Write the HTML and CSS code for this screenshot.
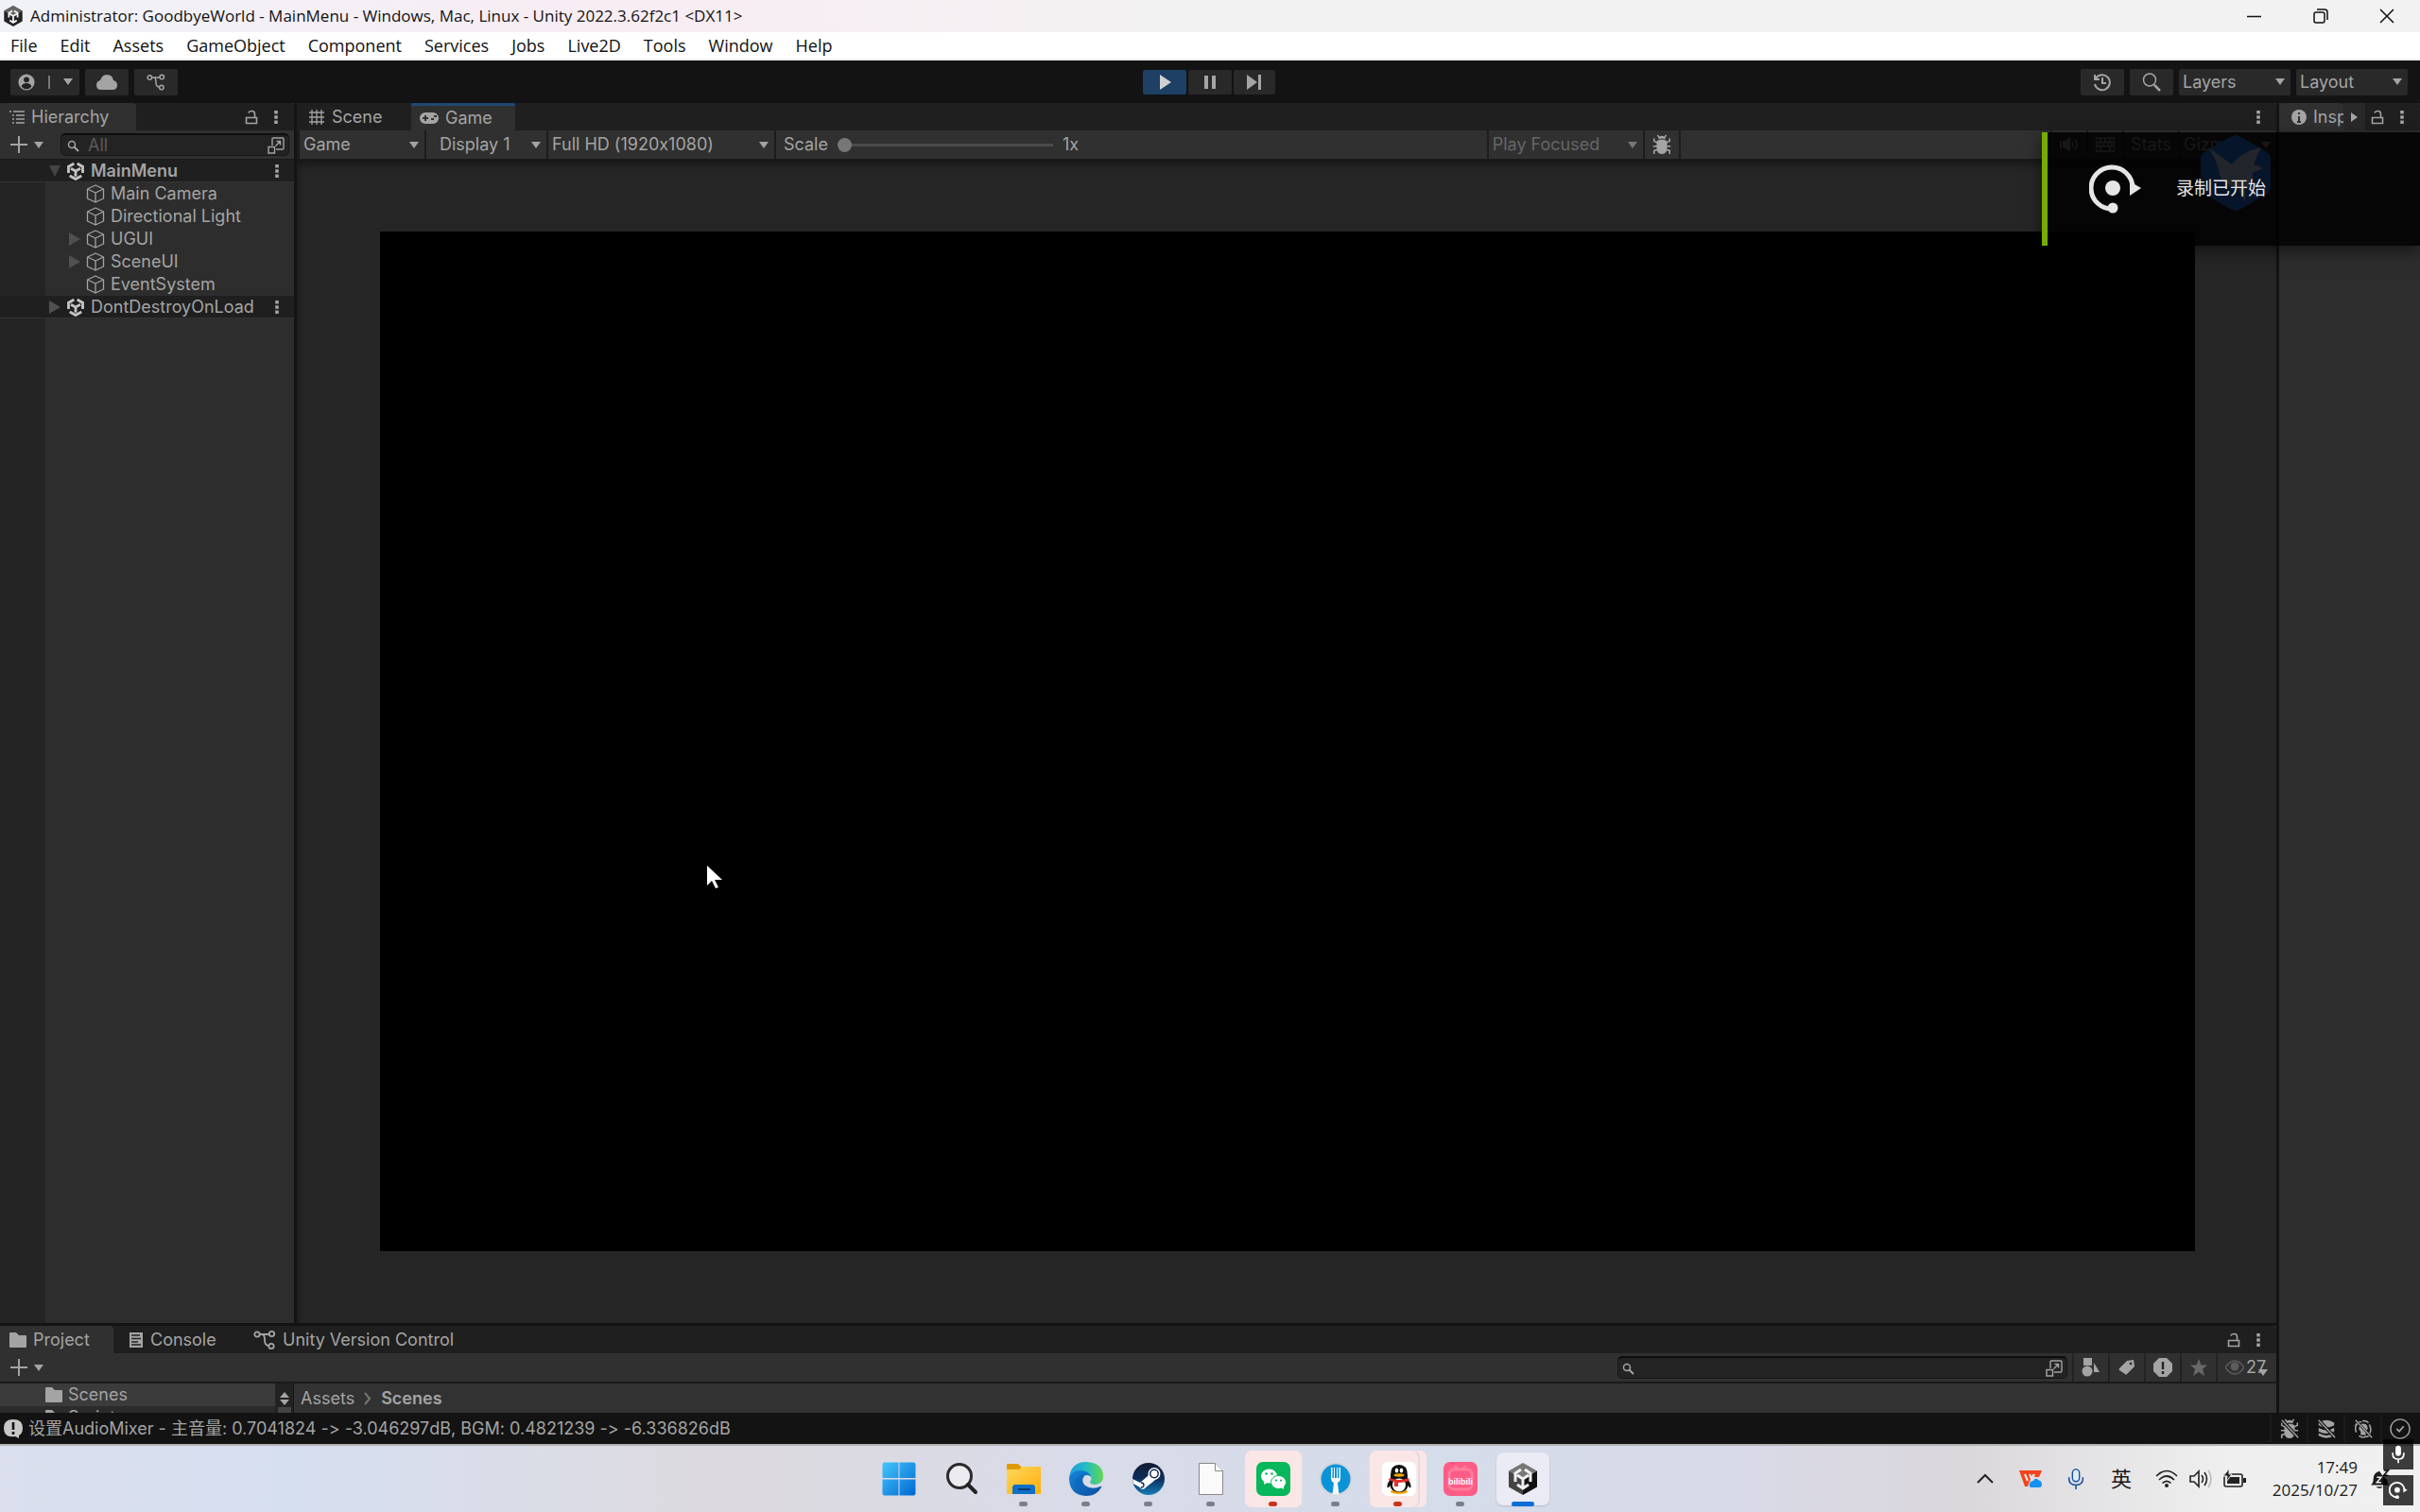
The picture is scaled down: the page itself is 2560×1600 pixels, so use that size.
FILE: index.html
```html
<!DOCTYPE html>
<html lang="zh-CN">
<head>
    <meta charset="UTF-8">
    <meta name="viewport" content="width=device-width, initial-scale=1.0">
    <title>GoodbyeWorld - MainMenu - Unity</title>
    <link rel="stylesheet" href="styles.css">
</head>
<body>
    <!-- shared icons -->
    <svg class="sprite" aria-hidden="true">
        <symbol id="i-cube" viewBox="0 0 20 20"><path d="M10 1l8.500 4v10l-8.500 4-8.500-4V5zM1.500 5l8.500 4 8.500-4M10 9v10" fill="none" stroke="currentColor" stroke-width="1.300" stroke-linejoin="round"/></symbol>
        <symbol id="i-unity" viewBox="0 0 24 24"><path d="M10 2.500L3 6.500v8M14 2.500l7 4v8M4.500 18l7.500 4.200 7.500-4.200M12 12v7M12 12L6 8.700M12 12l6-3.300" fill="none" stroke="currentColor" stroke-width="3.400"/></symbol>
        <symbol id="i-lock" viewBox="0 0 14 16"><path d="M1.500 8.500h11v6h-11zM10.500 8V4.500Q10.500 1.500 7.500 1.500T4 3.500" fill="none" stroke="currentColor" stroke-width="1.600"/></symbol>
        <symbol id="i-dots" viewBox="0 0 6 18"><path d="M1 1h4v4H1zM1 7h4v4H1zM1 13h4v4H1z" fill="currentColor"/></symbol>
        <symbol id="i-plus" viewBox="0 0 18 18"><path d="M9 0v18M0 9h18" stroke="currentColor" stroke-width="2"/></symbol>
        <symbol id="i-find" viewBox="0 0 14 14"><path d="M7.500 8.500L12 13" stroke="currentColor" stroke-width="2"/><circle cx="5" cy="6" r="3.500" fill="none" stroke="currentColor" stroke-width="1.500"/></symbol>
        <symbol id="i-open" viewBox="0 0 18 18"><path d="M5 9V2q0-1 1-1h10q1 0 1 1v10q0 1-1 1H9M1 10.500h6.500V17H1zM8.500 9.500l5-5M9.500 4.500h4v4" fill="none" stroke="currentColor" stroke-width="1.400"/></symbol>
        <symbol id="i-branch" viewBox="0 0 24 22"><g fill="none" stroke="currentColor" stroke-width="1.800"><circle cx="4" cy="5" r="2.700"/><circle cx="19.500" cy="4.500" r="2.700"/><circle cx="19" cy="17.500" r="2.700"/><path d="M7 5h10M9 5q3 0 3 6t4.500 6"/></g></symbol>
        <symbol id="i-folder" viewBox="0 0 18 16"><path d="M0 1q0-1 1-1h6l3 3h7q1 0 1 1v11q0 1-1 1H1q-1 0-1-1z" fill="currentColor"/></symbol>
        <symbol id="i-alert" viewBox="0 0 20 20"><path d="M6 0h8l6 6v8l-6 6H6l-6-6V6z" fill="currentColor"/><path d="M10 4v8M10 14v3" stroke="#222" stroke-width="2.400"/></symbol>
        <symbol id="i-bug" viewBox="0 0 22 24"><path d="M5 8q6-4 12 0v9q-1 6-6 6t-6-6zM7 6q0-4 4-4t4 4q-4-2-8 0z" fill="currentColor"/><path d="M8 4L6 1M14 4l2-3M6 10L2 8V5M16 10l4-2V5M6 14H1M16 14h5M6 18l-4 1v4M16 18l4 1v4" fill="none" stroke="currentColor" stroke-width="1.700"/></symbol>
        <symbol id="i-mic" viewBox="0 0 20 24"><rect x="6.500" y="1" width="7" height="13" rx="3.500" fill="currentColor"/><path d="M3 10v2q0 6 7 6t7-6v-2M10 18v5" fill="none" stroke="currentColor" stroke-width="2"/></symbol>
        <symbol id="i-record" viewBox="0 0 56 52"><circle cx="25" cy="25" r="8" fill="currentColor"/><path d="M25 47A22 22 0 1 1 46 24" fill="none" stroke="currentColor" stroke-width="5"/><path d="M43 18l12 7-12 8z" fill="currentColor"/><circle cx="25" cy="46" r="5.500" fill="currentColor"/></symbol>
    </svg>

    <header class="titlebar">
        <svg class="app-icon" viewBox="0 0 24 26"><path d="M12 1l10.500 6v12L12 25 1.500 19V7z" fill="#222"/><path d="M12 1l10.500 6L12 13 1.500 7z" fill="#666"/><path d="M11 7l-4 2.500v5M13 7l4 2.500v5M12 13v7M12 13L8 10.500M12 13l4-2.500M8 18l4 2.500 4-2.500" fill="none" stroke="#f2f2f2" stroke-width="2"/></svg>
        <h1>Administrator: GoodbyeWorld - MainMenu - Windows, Mac, Linux - Unity 2022.3.62f2c1 &lt;DX11&gt;</h1>
        <div class="window-buttons">
            <button aria-label="Minimize"><svg viewBox="0 0 16 16"><path d="M0 8.500h15"/></svg></button>
            <button aria-label="Restore"><svg viewBox="0 0 16 16"><rect x="1" y="4" width="11" height="11" rx="2"/><path d="M4 1h8q3 0 3 3v8"/></svg></button>
            <button aria-label="Close"><svg viewBox="0 0 16 16"><path d="M1 1l14 14M15 1L1 15"/></svg></button>
        </div>
    </header>

    <nav class="menubar">
        <a href="#">File</a>
        <a href="#">Edit</a>
        <a href="#">Assets</a>
        <a href="#">GameObject</a>
        <a href="#">Component</a>
        <a href="#">Services</a>
        <a href="#">Jobs</a>
        <a href="#">Live2D</a>
        <a href="#">Tools</a>
        <a href="#">Window</a>
        <a href="#">Help</a>
    </nav>

    <div class="toolbar">
        <div class="tools">
            <button class="tool account" aria-label="Account">
                <svg class="ic18" viewBox="0 0 20 20"><circle cx="10" cy="10" r="9.500" fill="currentColor"/><circle cx="10" cy="7" r="3.200" fill="#222"/><path d="M4 15q1-4 6-4t6 4q-2 3-6 3t-6-3z" fill="#222"/></svg>
                <span class="bar"></span>
                <span class="arrow"></span>
            </button>
            <button class="tool" aria-label="Cloud"><svg class="ic22" viewBox="0 0 22 18"><path d="M5 17q-5 0-5-5 0-4 4-5 2-6 7-6 6 0 7 6 4 1 4 5 0 5-5 5z" fill="currentColor"/></svg></button>
            <button class="tool" aria-label="Version control"><svg class="ic20"><use href="#i-branch"/></svg></button>
        </div>
        <div class="play">
            <button class="tool on" aria-label="Play"><svg class="ic16" viewBox="0 0 16 16"><path d="M3 0l12 8-12 8z" fill="currentColor"/></svg></button>
            <button class="tool" aria-label="Pause"><svg class="ic16" viewBox="0 0 16 16"><path d="M2 1h4v14H2zM10 1h4v14h-4z" fill="currentColor"/></svg></button>
            <button class="tool step" aria-label="Step"><svg class="ic16" viewBox="0 0 16 16"><path d="M0 0l11 8-11 8zM12 0h3v16h-3z" fill="currentColor"/></svg></button>
        </div>
        <div class="tools right">
            <button class="tool" aria-label="Undo history"><svg class="ic20" viewBox="0 0 20 20"><path d="M3 6a8 8 0 1 1-1 6M2 2v5h5M10 5v6h4" fill="none" stroke="currentColor" stroke-width="2"/></svg></button>
            <button class="tool" aria-label="Search"><svg class="ic20" viewBox="0 0 20 20"><circle cx="8" cy="7.500" r="6.500" fill="none" stroke="currentColor" stroke-width="1.500"/><path d="M13 13l6 6" stroke="currentColor" stroke-width="2.500"/></svg></button>
            <label class="drop boxed"><select aria-label="Layers"><option>Layers</option></select></label>
            <label class="drop boxed"><select aria-label="Layout"><option>Layout</option></select></label>
        </div>
    </div>

    <main class="editor">
        <aside class="hierarchy">
            <div class="tabs">
                <button class="tab hierarchy-tab active"><svg class="ic16" viewBox="0 0 16 14"><path d="M0 1h2M4 1h12M3 5h2M7 5h9M3 9h2M7 9h9M3 13h2M7 13h9" stroke="currentColor" stroke-width="1.500"/></svg>Hierarchy</button>
                <button class="bare push" aria-label="Lock"><svg class="ic16"><use href="#i-lock"/></svg></button>
                <button class="bare" aria-label="More"><svg class="ic16"><use href="#i-dots"/></svg></button>
            </div>
            <div class="strip">
                <button class="add" aria-label="Create"><svg class="ic18"><use href="#i-plus"/></svg><span class="arrow"></span></button>
                <label class="search">
                    <svg class="ic14"><use href="#i-find"/></svg>
                    <input type="text" placeholder="All" aria-label="Search hierarchy">
                    <svg class="ic18"><use href="#i-open"/></svg>
                </label>
            </div>
            <ul class="tree">
                <li class="scene open"><span class="fold down"></span><svg class="ic20"><use href="#i-unity"/></svg><b>MainMenu</b><svg class="ic16 more"><use href="#i-dots"/></svg></li>
                <li class="node"><span class="fold none"></span><svg class="ic20"><use href="#i-cube"/></svg>Main Camera</li>
                <li class="node"><span class="fold none"></span><svg class="ic20"><use href="#i-cube"/></svg>Directional Light</li>
                <li class="node"><span class="fold"></span><svg class="ic20"><use href="#i-cube"/></svg>UGUI</li>
                <li class="node"><span class="fold"></span><svg class="ic20"><use href="#i-cube"/></svg>SceneUI</li>
                <li class="node"><span class="fold none"></span><svg class="ic20"><use href="#i-cube"/></svg>EventSystem</li>
                <li class="scene"><span class="fold"></span><svg class="ic20"><use href="#i-unity"/></svg>DontDestroyOnLoad<svg class="ic16 more"><use href="#i-dots"/></svg></li>
            </ul>
        </aside>

        <section class="game">
            <div class="tabs">
                <button class="tab scene-tab"><svg class="ic16" viewBox="0 0 16 16"><path d="M3 0v16M8 0v16M13 0v16M0 3h16M0 8h16M0 13h16" stroke="currentColor" stroke-width="1.300"/></svg>Scene</button>
                <button class="tab game-tab active focused"><svg class="ic20" viewBox="0 0 20 12"><rect width="20" height="12" rx="6" fill="currentColor"/><path d="M6 3v6M3 6h6M12 7h3M15 4h3" stroke="#303030" stroke-width="2"/></svg>Game</button>
                <button class="bare push" aria-label="More"><svg class="ic16"><use href="#i-dots"/></svg></button>
            </div>
            <div class="strip game-strip">
                <label class="drop view"><select aria-label="View"><option>Game</option></select></label>
                <label class="drop display"><select aria-label="Display"><option>Display 1</option></select></label>
                <label class="drop aspect"><select aria-label="Resolution"><option>Full HD (1920x1080)</option></select></label>
                <div class="scale">
                    <label for="scale">Scale</label>
                    <input id="scale" type="range" min="1" max="5" step="0.1" value="1">
                    <output for="scale">1x</output>
                </div>
                <label class="drop focus"><select aria-label="Play mode" disabled><option>Play Focused</option></select></label>
                <button class="cell" aria-label="Frame debugger"><svg class="ic24"><use href="#i-bug"/></svg></button>
                <span class="cell blank"></span>
                <button class="cell" aria-label="Mute audio"><svg class="ic20" viewBox="0 0 20 16"><path d="M0 4h2v8H0zM3 4h3l5-4v16l-5-4H3z" fill="currentColor"/><path d="M13 5q2 3 0 6M16 3q4 5 0 10" fill="none" stroke="currentColor" stroke-width="1.500"/></svg></button>
                <button class="cell" aria-label="Shortcuts"><svg class="ic20" viewBox="0 0 20 16"><path d="M0 1h20v14H0zM0 5.500h20M0 10h20M5 1v4.500M10 1v4.500M15 1v4.500M3 5.500V10M8 5.500V10M13 5.500V10M17 5.500V10M5 10v5M15 10v5" fill="none" stroke="currentColor" stroke-width="1.500"/></svg></button>
                <button class="cell stats">Stats</button>
                <label class="drop gizmos"><select aria-label="Gizmos"><option>Gizmos</option></select></label>
            </div>
            <div class="viewport">
                <div class="screen"></div>
            </div>
        </section>

        <section class="project">
            <div class="tabs">
                <button class="tab project-tab active"><svg class="ic18"><use href="#i-folder"/></svg>Project</button>
                <button class="tab console-tab"><svg class="ic16" viewBox="0 0 16 16"><path d="M1 0h14v16H1z" fill="currentColor"/><path d="M3 3h9M3 6.500h10M3 10h7M3 13h10" stroke="#222" stroke-width="1.500"/></svg>Console</button>
                <button class="tab version-tab"><svg class="ic24"><use href="#i-branch"/></svg>Unity Version Control</button>
                <button class="bare push" aria-label="Lock"><svg class="ic16"><use href="#i-lock"/></svg></button>
                <button class="bare" aria-label="More"><svg class="ic16"><use href="#i-dots"/></svg></button>
            </div>
            <div class="strip project-strip">
                <button class="add" aria-label="Create asset"><svg class="ic18"><use href="#i-plus"/></svg><span class="arrow"></span></button>
                <label class="search wide">
                    <svg class="ic14"><use href="#i-find"/></svg>
                    <input type="text" aria-label="Search assets">
                    <svg class="ic18"><use href="#i-open"/></svg>
                </label>
                <button class="cell" aria-label="Search by type"><svg class="ic20" viewBox="0 0 20 20"><path d="M2 0h9v8H2zM13 5l6 10h-6z" fill="currentColor"/><circle cx="6" cy="14" r="5.500" fill="currentColor"/></svg></button>
                <button class="cell" aria-label="Search by label"><svg class="ic18" viewBox="0 0 18 18"><path d="M1 10l8-8 7-1 1 7-8 8q-1 1-2 0l-6-4q-1-1 0-2z" fill="currentColor"/><circle cx="13" cy="5" r="1.400" fill="#303030"/></svg></button>
                <button class="cell" aria-label="Search by import log"><svg class="ic20"><use href="#i-alert"/></svg></button>
                <button class="cell dim" aria-label="Save search"><svg class="ic20" viewBox="0 0 20 20"><path d="M10 1l2.500 6.500H19l-5 4.300 2 7.200-6-4.300L4 19l2-7.200L1 7.500h6.500z" fill="currentColor"/></svg></button>
                <button class="cell hidden-count"><svg class="ic20" viewBox="0 0 20 14"><path d="M0 7q10-14 20 0-10 14-20 0z" fill="none" stroke="#5c5c5c" stroke-width="1.500"/><circle cx="10" cy="6" r="4.500" fill="#5c5c5c"/></svg>27<span class="arrow"></span></button>
            </div>
            <div class="browser">
                <ul class="folders">
                    <li class="selected"><svg class="ic18"><use href="#i-folder"/></svg>Scenes</li>
                    <li><svg class="ic18"><use href="#i-folder"/></svg>Scripts</li>
                </ul>
                <div class="scroller"><span class="up"></span><span class="dn"></span><span class="thumb"></span></div>
                <div class="crumbs"><a href="#">Assets</a><svg class="sep" viewBox="0 0 8 14"><path d="M1 1l5 6-5 6"/></svg><a href="#"><b>Scenes</b></a></div>
            </div>
        </section>

        <aside class="inspector">
            <div class="tabs">
                <button class="tab inspector-tab active"><svg class="ic16" viewBox="0 0 16 16"><circle cx="8" cy="8" r="8" fill="currentColor"/><path d="M8 3v2M8 7v6M6 13h4" stroke="#303030" stroke-width="2"/></svg><span>Inspector</span></button>
                <button class="scroll-right" aria-label="Next tab"><span class="arrow east"></span></button>
                <button class="bare push" aria-label="Lock"><svg class="ic16"><use href="#i-lock"/></svg></button>
                <button class="bare" aria-label="More"><svg class="ic16"><use href="#i-dots"/></svg></button>
            </div>
        </aside>
    </main>

    <div class="statusbar">
        <svg class="ic20" viewBox="0 0 20 20"><path d="M10 0q10 0 10 9 0 6-4 8v3l-4-2q-12 2-12-9Q0 0 10 0z" fill="#c8c8c8"/><path d="M10 3v8M10 13v3" stroke="#131313" stroke-width="2.600"/></svg>
        <p>设置AudioMixer - 主音量: 0.7041824 -&gt; -3.046297dB, BGM: 0.4821239 -&gt; -6.336826dB</p>
        <div class="status-icons">
            <button aria-label="Debugger"><svg class="ic24" viewBox="0 0 22 24"><use href="#i-bug" width="22" height="24"/><path d="M2 2l19 20" stroke="#131313" stroke-width="4"/><path d="M2 2l19 20" stroke="currentColor" stroke-width="1.500"/></svg></button>
            <button aria-label="Cache server"><svg class="ic24" viewBox="0 0 22 24"><path d="M2 5q9-6 18 0v3q-9 5-18 0zM2 11q9 5 18 0v4q-9 5-18 0zM2 17q9 5 18 0v3q-9 5-18 0z" fill="currentColor"/><path d="M2 2l19 20" stroke="#131313" stroke-width="4"/><path d="M2 2l19 20" stroke="currentColor" stroke-width="1.500"/></svg></button>
            <button aria-label="Auto lighting"><svg class="ic24" viewBox="0 0 22 24"><path d="M3 16Q0 9 5 4h4M18 7q4 8-2 14h-4M6 20q4 3 8 1M10 3q4-1 7 2M4 8V4M18 21v-4" fill="none" stroke="currentColor" stroke-width="1.700"/><path d="M11 6a5 5 0 0 1 3 9v4H8v-4a5 5 0 0 1 3-9z" fill="currentColor"/><path d="M2 2l19 20" stroke="#131313" stroke-width="3"/><path d="M2 2l19 20" stroke="currentColor" stroke-width="1.500"/></svg></button>
            <button aria-label="Progress"><svg class="ic24" viewBox="0 0 24 24"><circle cx="12" cy="12" r="11" fill="none" stroke="currentColor" stroke-width="1.500"/><path d="M8 12l3 3 5-6" fill="none" stroke="currentColor" stroke-width="2"/></svg></button>
        </div>
    </div>

    <footer class="taskbar">
        <div class="apps">
            <button class="app" aria-label="Start"><svg viewBox="0 0 36 36"><defs><linearGradient id="win" x1="0" y1="0" x2="1" y2="1"><stop offset="0" stop-color="#45c6fc"/><stop offset="1" stop-color="#0067d2"/></linearGradient></defs><path d="M2 .5h15.500V17H.5V2zM18.500.5h15.500l1.500 1.500v15h-17zM.5 18.500h17v17H2L.5 34zM18.500 18.500h17V34L34 35.500H18.500z" fill="url(#win)"/></svg></button>
            <button class="app" aria-label="Search"><svg viewBox="0 0 36 36"><circle cx="16" cy="15" r="12.500" fill="#ebebf0" stroke="#2b2b2b" stroke-width="3"/><path d="M25 24l8 8" stroke="#222" stroke-width="4" stroke-linecap="round"/></svg></button>
            <button class="app running" aria-label="File Explorer"><svg viewBox="0 0 36 36"><defs><linearGradient id="fold" x1="0" y1="0" x2="1" y2="1"><stop offset="0" stop-color="#ffd75e"/><stop offset="1" stop-color="#fdae0a"/></linearGradient></defs><path d="M0 8V3q0-1 1-1h11l4 4v4z" fill="#e19a07"/><path d="M0 8h13l3-3h20v29H0z" fill="url(#fold)"/><path d="M6 34v-7q0-3 3-3h18q3 0 3 3v7z" fill="#0f6fc6"/><path d="M12 29h13" stroke="#0b3f73" stroke-width="2"/></svg></button>
            <button class="app running" aria-label="Edge"><svg viewBox="0 0 36 36"><defs><linearGradient id="edge" x1="0" y1="0" x2="1" y2="0"><stop offset="0" stop-color="#1e9be0"/><stop offset=".5" stop-color="#23bcc4"/><stop offset="1" stop-color="#62d852"/></linearGradient><linearGradient id="edgeb" x1="0" y1="0" x2="1" y2="1"><stop offset="0" stop-color="#1586dc"/><stop offset="1" stop-color="#0b4d9c"/></linearGradient></defs><path d="M0 17Q2 0 18 0q18 1 18 15 0 8-8 9-6 0-6-3 3-3 0-6-9-9-22 2z" fill="url(#edge)"/><path d="M0 17Q3 9 12 9q8 0 11 6-5-2-7 0-4 5 1 10 7 5 16 1 2-1 1 1-5 9-16 9Q0 35 0 17z" fill="url(#edgeb)"/><path d="M15 16q-5 8 3 13-7 2-11-4-3-8 8-12z" fill="#0b63b8" opacity=".5"/></svg></button>
            <button class="app running" aria-label="Steam"><svg viewBox="0 0 36 36"><defs><linearGradient id="steam" x1="0" y1="0" x2="0" y2="1"><stop offset="0" stop-color="#151a33"/><stop offset=".5" stop-color="#0c2e5c"/><stop offset="1" stop-color="#157fb5"/></linearGradient></defs><circle cx="18" cy="18" r="17" fill="url(#steam)"/><path d="M1 18l8 4 8-7 4-6 7 5-4 6-9 7q-3 4-6 0l-7-4z" fill="#fff"/><circle cx="24" cy="12.500" r="6.500" fill="#fff"/><circle cx="24" cy="12.500" r="4.200" fill="none" stroke="#14284e" stroke-width="1.500"/><path d="M10 22q3 0 3 2.500T10 27" fill="none" stroke="#14284e" stroke-width="1.300"/></svg></button>
            <button class="app running" aria-label="Document"><svg viewBox="0 0 36 36"><path d="M5.500 1.500h17l8 8v25h-25z" fill="#fafafa" stroke="#888"/><path d="M22.500 1.500v8h8" fill="#fff" stroke="#888"/></svg></button>
            <button class="app running alert" aria-label="WeChat"><svg viewBox="0 0 36 36"><rect width="36" height="36" rx="7" fill="#07b75b"/><ellipse cx="13.500" cy="15" rx="8.500" ry="7.500" fill="#fff"/><path d="M8 19v5l5-3z" fill="#fff"/><ellipse cx="23.500" cy="21.500" rx="8" ry="7" fill="#fff" stroke="#07b75b"/><path d="M25 26l4 3v-5z" fill="#fff"/><g fill="#07b75b"><circle cx="10.500" cy="12.500" r="1.300"/><circle cx="16.500" cy="12.500" r="1.300"/><circle cx="21" cy="19.500" r="1.100"/><circle cx="26" cy="19.500" r="1.100"/></g></svg></button>
            <button class="app running" aria-label="Fork"><svg viewBox="0 0 36 36"><circle cx="18" cy="18" r="16.500" fill="#0b93d8" stroke="#d0d3d8" stroke-width="2"/><path d="M13 6v11q0 4 3 5l-1.500 12.500h7L20 22q3-1 3-5V6h-1.500v11h-1.500V6h-1v11h-2V6h-1v11h-1.500V6z" fill="#f4f6f8"/></svg></button>
            <button class="app running alert stacked" aria-label="QQ"><svg viewBox="0 0 36 36"><rect width="36" height="36" rx="6" fill="#fff"/><ellipse cx="18" cy="31.500" rx="9" ry="2.500" fill="#f5a300"/><path d="M18 3q9 0 9 11v4q4 5 3.500 9-1.500 1-3-2-1 7-9.500 7t-9.500-7q-1.500 3-3 2Q5 23 9 18v-4Q9 3 18 3z" fill="#111"/><ellipse cx="18" cy="24.500" rx="7" ry="7" fill="#fff"/><ellipse cx="15.500" cy="9" rx="1.800" ry="2.600" fill="#fff"/><ellipse cx="20.500" cy="9" rx="1.800" ry="2.600" fill="#fff"/><ellipse cx="18" cy="14" rx="5.500" ry="1.700" fill="#f5a300"/><path d="M8 17q10 4 20 0l1 3q-5 2-12 2v4h-4v-5q-4-1-6-2z" fill="#e6302b"/></svg></button>
            <button class="app running" aria-label="bilibili"><svg viewBox="0 0 36 36"><rect width="36" height="36" rx="7" fill="#fd5c86"/><path d="M12 4l4 4M24 4l-4 4" stroke="#fe7c9d" stroke-width="3"/><rect x="6" y="8" width="24" height="21" rx="5" fill="none" stroke="#fe7c9d" stroke-width="3"/><text x="18" y="24" text-anchor="middle" class="bili">bilibili</text></svg></button>
            <button class="app running current" aria-label="Unity"><svg viewBox="0 0 36 36"><path d="M18 1l15 8.500L18 18 3 9.500z" fill="#777"/><path d="M3 9.500L18 18v17L3 26.500z" fill="#444"/><path d="M33 9.500L18 18v17l15-8.500z" fill="#111"/><path d="M16 8l-6 4v9M20 8l6 4v9M12 24l6 4 6-4M18 18v8M18 18l-6-4M18 18l6-4" fill="none" stroke="#f0f0f2" stroke-width="3"/></svg></button>
        </div>
        <div class="tray">
            <button aria-label="Show hidden icons"><svg class="ic18" viewBox="0 0 18 18"><path d="M1 13l8-8 8 8" fill="none" stroke="#222" stroke-width="2"/></svg></button>
            <button aria-label="WPS"><svg class="ic24" viewBox="0 0 24 20"><path d="M0 1h24l-3 7h-5l1-3h-3L9 18H6z" fill="#f2451e"/><path d="M6 5l3 7M11 5l2 5" stroke="#eee" stroke-width="2"/><path d="M13 19q-3 0-2-4 1-3 4-3 2-4 5-1 4 1 4 5 0 3-3 3z" fill="#1491f5"/></svg></button>
            <button aria-label="Microphone"><svg class="ic24" viewBox="0 0 20 24"><rect x="6" y="1" width="8" height="14" rx="4" fill="#dfeaf8" stroke="#1552a0" stroke-width="1.500"/><path d="M2 10v2q0 7 8 7t8-7v-2M10 19v5" fill="none" stroke="#1552a0" stroke-width="1.700"/></svg></button>
            <button class="ime">英</button>
            <button class="quick" aria-label="Network, volume and battery">
                <svg class="ic24" viewBox="0 0 24 20"><g fill="none" stroke="#222" stroke-width="1.700"><path d="M1 7q11-11 22 0M4 11q8-8 16 0M7.500 14.500q4.500-4.500 9 0"/></g><circle cx="12" cy="17" r="2" fill="#222"/></svg>
                <svg class="ic24" viewBox="0 0 24 20"><g fill="none" stroke="#222" stroke-width="1.600"><path d="M1 7h4l5-5v16l-5-5H1zM13 6q3 4 0 8M16 3q5 7 0 14"/><path d="M20 1q6 9 0 18" stroke="#bbb"/></g></svg>
                <svg class="ic24" viewBox="0 0 24 20"><rect x="1" y="5" width="19" height="13" rx="2" fill="none" stroke="#222" stroke-width="1.600"/><path d="M4 8h13v7H4zM21 9h3v5h-3z" fill="#222"/><path d="M6-1L0 7h4l-1 6 6-8H6z" fill="#222" stroke="#eee"/></svg>
            </button>
            <button class="clock"><time>17:49</time><time>2025/10/27</time></button>
            <button aria-label="Notifications"><svg class="ic24" viewBox="0 0 24 24"><path d="M1 19q3-2 3-7 0-7 7-9 3 6 9 10 0 4 2 6zM7 21h8q-4 4-8 0z" fill="#1c1c1c"/><path d="M8 10h5l-5 6h5" fill="none" stroke="#eee" stroke-width="1.600"/><path d="M16 2h5l-5 6h5" fill="none" stroke="#1c1c1c" stroke-width="2"/></svg></button>
        </div>
    </footer>

    <!-- recorder overlays -->
    <div class="toast" role="status">
        <svg class="badge" viewBox="0 0 76 82"><path d="M38 1q4 0 33 18 4 3 4 7v30q0 4-4 7Q42 81 38 81T5 63q-4-3-4-7V26q0-4 4-7Q34 1 38 1z" fill="#07152b"/><path d="M9 14l25 18Q45 18 65 14q-5 9-8 18l10 4-11 5q0 12-8 17v14l-8-16q-18-2-20-18-2-11-11-24z" fill="#22252b"/></svg>
        <svg class="rec"><use href="#i-record"/></svg>
        <p>录制已开始</p>
    </div>
    <div class="indicators">
        <span><svg class="ic20"><use href="#i-mic"/></svg></span>
        <span><svg class="ic20"><use href="#i-record"/></svg></span>
    </div>
    <svg class="cursor" viewBox="0 0 16 24"><path d="M0 0v21l5-5 4 8 3-1-4-8h8z" fill="#fff"/></svg>
</body>
</html>
```
FILE: styles.css
```css
* {
    margin: 0;
    padding: 0;
    box-sizing: border-box;
}
body {
    min-height: 100vh;
    display: flex;
    flex-direction: column;
    background: #131313;
    color: #a4a4a4;
    font: 18px/24px Inter, "Noto Sans CJK SC", sans-serif;
    font-variant-ligatures: none;
    font-optical-sizing: none;
    overflow: hidden;
    position: relative;
}
button, input, select {
    font: inherit;
    font-variant-ligatures: none;
    font-optical-sizing: none;
    color: inherit;
    background: none;
    border: none;
    outline: none;
}
button {
    display: flex;
    align-items: center;
    justify-content: center;
    white-space: nowrap;
}
a {
    color: inherit;
    text-decoration: none;
}
ul {
    list-style: none;
}
svg {
    flex: none;
}
.sprite {
    position: absolute;
    width: 0;
    height: 0;
}
.ic14 { width: 14px; height: 14px; }
.ic16 { width: 16px; height: 16px; }
.ic18 { width: 18px; height: 18px; }
.ic20 { width: 20px; height: 20px; }
.ic22 { width: 22px; height: 22px; }
.ic24 { width: 24px; height: 22px; }

/* window frame */
.titlebar {
    height: 34px;
    display: flex;
    align-items: center;
    padding-left: 2px;
    background: linear-gradient(90deg, #f0f2f8, #f8ecf3 26%, #f2f2f2 50%);
    color: #111;
}
.app-icon {
    width: 24px;
    height: 24px;
}
.titlebar h1 {
    flex: 1;
    padding-left: 6px;
    font: 17px/24px "Open Sans", sans-serif;
}
.window-buttons {
    display: flex;
}
.window-buttons button {
    width: 70px;
    height: 34px;
}
.window-buttons svg {
    width: 16px;
    height: 16px;
    fill: none;
    stroke: #111;
    stroke-width: 1.5;
}
.menubar {
    height: 30px;
    display: flex;
    gap: 24px;
    padding-left: 11px;
    background: #fff;
    border-bottom: 2px solid #f0f0f0;
    color: #111;
    font: 18px/28px "Open Sans", sans-serif;
}

/* toolbar */
.toolbar {
    height: 45px;
    display: grid;
    grid-template-columns: 1fr auto 1fr;
    align-items: center;
    padding: 0 13px 0 11px;
}
.tools {
    display: flex;
    gap: 6px;
}
.right {
    justify-content: flex-end;
}
.play {
    display: flex;
    gap: 2px;
}
.tool {
    width: 46px;
    height: 28px;
    background: #292929;
    border-radius: 2px;
}
.play .tool {
    height: 26px;
}
.play .step {
    width: 44px;
}
.tool.on {
    background: #1d4064;
    color: #d0d0d0;
}
.account {
    width: 73px;
    gap: 14px;
}
.bar {
    width: 2px;
    height: 14px;
    background: #777;
}
.arrow, .drop::after {
    content: "";
    border: 5px solid transparent;
    border-top: 7px solid #a4a4a4;
    border-bottom: none;
}
.arrow.east {
    border: 5px solid transparent;
    border-left: 7px solid #a4a4a4;
    border-right: none;
}
.drop {
    display: flex;
    align-items: center;
    padding: 0 6px 0 4px;
}
.drop select {
    flex: 1;
    min-width: 0;
    appearance: none;
}
.drop select:disabled {
    color: #666;
    opacity: 1;
}
.boxed {
    width: 118px;
    height: 28px;
    background: #292929;
    border-radius: 2px;
}

/* docked panels */
.editor {
    flex: 1;
    display: grid;
    grid-template-columns: 311px 1fr 149px;
    grid-template-rows: 1fr 92px;
    gap: 3px;
}
.tabs {
    display: flex;
    height: 29px;
    background: #1f1f1f;
    border-radius: 4px 4px 0 0;
}
.tab {
    gap: 7px;
    justify-content: flex-start;
    padding: 0 10px;
}
.tab.active {
    background: #303030;
    border-radius: 4px 4px 0 0;
}
.hierarchy-tab {
    width: 144px;
}
.scene-tab {
    width: 121px;
    gap: 8px;
    padding-left: 13px;
}
.game-tab {
    width: 110px;
    padding-left: 9px;
}
.tab.focused {
    border-top: 3px solid #1f4a74;
    border-radius: 2px 2px 0 0;
}
.bare {
    width: 26px;
}
.push {
    margin-left: auto;
}
.bare:last-child {
    margin-right: 6px;
}
.strip {
    display: flex;
    height: 31px;
    background: #303030;
    border-bottom: 1px solid #1a1a1a;
}
.add {
    flex: none;
    gap: 7px;
    width: 56px;
}
.search {
    flex: 1;
    min-width: 0;
    display: flex;
    align-items: center;
    gap: 8px;
    height: 24px;
    margin: 3px 5px 0 8px;
    padding: 0 4px 0 6px;
    background: #232323;
    border: 1px solid #181818;
    border-top: 2px solid #0d0d0d;
    border-radius: 5px;
}
.search input {
    flex: 1;
    min-width: 0;
}
.search input::placeholder {
    color: #5a5a5a;
}
.search.wide {
    flex: none;
    width: 476px;
    margin-left: auto;
    padding-left: 4px;
}

.hierarchy {
    display: flex;
    flex-direction: column;
    background: #2d2d2d;
}
.tree {
    flex: 1;
    background: linear-gradient(90deg, #242424 48px, transparent 48px);
}
.tree li {
    display: flex;
    align-items: center;
    gap: 6px;
    height: 24px;
}
.tree .scene {
    background: #1f1f1f;
    border-bottom: 1px solid #333;
    padding: 0 10px 0 52px;
}
.tree .scene b {
    font-weight: 600;
}
.tree .node {
    padding-left: 73px;
}
.tree .more {
    margin-left: auto;
}
.scene svg:first-of-type {
    color: #c4c4c4;
}
.fold {
    width: 12px;
    border: 7px solid transparent;
    border-left: 12px solid #505050;
    border-right: none;
}
.fold.down {
    border: 6px solid transparent;
    border-top: 12px solid #454545;
    border-bottom: none;
}
.fold.none {
    visibility: hidden;
}

.game {
    display: flex;
    flex-direction: column;
    background: #262626;
}
.game-strip {
    gap: 2px;
    padding-left: 3px;
    background: #1c1c1c;
}
.game-strip > * {
    background: #303030;
}
.view { width: 132px; }
.display { width: 127px; padding-left: 14px; }
.aspect { width: 239px; }
.scale {
    flex: 747 0;
    display: flex;
    align-items: center;
    gap: 10px;
    padding-left: 8px;
}
.scale input {
    width: 228px;
    height: 16px;
    appearance: none;
    background: linear-gradient(#4c4c4c, #4c4c4c) center / 100% 3px no-repeat;
}
.scale input::-webkit-slider-thumb {
    appearance: none;
    width: 15px;
    height: 15px;
    border-radius: 50%;
    background: #777;
}
.focus {
    width: 163px;
}
.focus::after {
    border-top-color: #777;
}
.cell {
    width: 36px;
}
.blank {
    flex: 393 0;
}
.stats { width: 57px; }
.gizmos { width: 102px; }
.viewport {
    flex: 1;
    padding: 76px 86px 76px 88px;
    box-shadow: inset 0 12px 10px -8px #151515, inset 6px 0 6px -4px #1d1d1d;
}
.screen {
    height: 100%;
    background: #000;
}

.project {
    grid-column: 1 / 3;
    grid-row: 2;
    background: #303030;
    overflow: hidden;
}
.project-tab { width: 120px; }
.console-tab { width: 138px; padding-left: 16px; }
.version-tab { padding-left: 10px; }
.project-strip .cell {
    width: 38px;
    border-left: 2px solid #232323;
}
.dim {
    color: #686868;
}
.project-strip .hidden-count {
    justify-content: flex-start;
    width: 64px;
    gap: 2px;
    padding-left: 8px;
}
.hidden-count .arrow {
    margin: 10px 0 0 -10px;
}
.browser {
    display: flex;
    height: 32px;
    border-top: 1px solid #1a1a1a;
    overflow: hidden;
}
.folders {
    width: 291px;
    background: #2b2b2b;
}
.folders li {
    display: flex;
    align-items: center;
    gap: 6px;
    height: 24px;
    padding-left: 48px;
}
.folders .selected {
    background: #3b3b3b;
}
.scroller {
    width: 20px;
    display: flex;
    flex-direction: column;
    align-items: center;
    gap: 2px;
    padding-top: 9px;
    background: #222;
    border-right: 1px solid #171717;
}
.up, .dn {
    border: 5px solid transparent;
}
.up {
    border-bottom: 6px solid #a4a4a4;
    border-top: none;
}
.dn {
    border-top: 6px solid #a4a4a4;
    border-bottom: none;
}
.thumb {
    width: 14px;
    height: 12px;
    background: #444;
}
.crumbs {
    flex: 1;
    display: flex;
    align-items: center;
    gap: 10px;
    padding-left: 7px;
    background: #323232;
}
.sep {
    width: 8px;
    height: 14px;
    fill: none;
    stroke: #777;
    stroke-width: 2;
}
.crumbs b {
    font-weight: 600;
}

.inspector {
    grid-column: 3;
    grid-row: 1 / 3;
    background: #2d2d2d;
}
.inspector-tab {
    width: 68px;
    padding: 0 0 0 13px;
    overflow: hidden;
}
.scroll-right {
    width: 24px;
    background: #292929;
}

/* status line */
.statusbar {
    height: 33px;
    display: flex;
    align-items: center;
    gap: 6px;
    padding: 0 3px 0 4px;
}
.status-icons {
    display: flex;
    margin-left: auto;
}
.status-icons button {
    width: 39px;
    height: 29px;
    border-left: 2px solid #1c1c1c;
}

/* taskbar */
.taskbar {
    height: 72px;
    display: grid;
    grid-template-columns: 1fr auto 1fr;
    align-items: center;
    border-top: 2px solid #b2b2b5;
    background: linear-gradient(90deg, #dbdfee, #d6dff0 12%, #dddadf 30%, #d9dbe8 44%, #d5dcea 60%, #d9dae8 72%, #dad7db 81%, #efefef 92%, #f0f0f0);
    color: #1a1a1a;
}
.apps {
    grid-column: 2;
    display: flex;
    gap: 6px;
    padding-left: 2px;
}
.app {
    width: 60px;
    height: 60px;
    border-radius: 7px;
    position: relative;
}
.app svg {
    width: 36px;
    height: 36px;
}
.running::after {
    content: "";
    position: absolute;
    bottom: 1px;
    left: 25px;
    width: 9px;
    height: 5px;
    border-radius: 3px;
    background: #7c7f88;
}
.alert {
    background: #fbe6e6;
}
.alert::after {
    background: #c93418;
}
.stacked {
    width: 51px;
    margin-right: 9px;
    padding-left: 10px;
    box-shadow: 2px 0 #dddbe4, 9px 0 #fbe6e6;
}
.current {
    background: #eaebf4;
    box-shadow: 0 1px 2px #b8bac6;
    height: 56px;
    margin: 2px;
    width: 56px;
}
.current::after {
    left: 16px;
    bottom: -1px;
    width: 24px;
    background: #0b6fd3;
}
.bili {
    font: bold 9px "Liberation Sans", sans-serif;
    fill: #fff;
}
.tray {
    display: flex;
    justify-content: flex-end;
    align-items: center;
    padding-right: 18px;
}
.tray button {
    width: 48px;
}
.tray .ime {
    font-size: 22px;
}
.tray .quick {
    width: 120px;
    gap: 12px;
}
.tray .clock {
    flex-direction: column;
    align-items: flex-end;
    width: 106px;
    font: 17px/24px "Open Sans", sans-serif;
}

/* overlays */
.toast {
    position: absolute;
    top: 140px;
    right: 0;
    width: 400px;
    height: 120px;
    display: flex;
    align-items: center;
    padding-left: 44px;
    background: rgba(0, 0, 0, 0.86);
    border-left: 6px solid #76ab00;
    box-shadow: 0 6px 16px rgba(0, 0, 0, 0.5);
    color: #e6e6e6;
    font-size: 19px;
}
.badge {
    position: absolute;
    top: 2px;
    left: 161px;
    width: 76px;
    height: 82px;
}
.rec {
    width: 56px;
    height: 52px;
    margin-right: 36px;
}
.toast p {
    position: relative;
}
.indicators {
    position: absolute;
    right: 7px;
    bottom: 7px;
    display: grid;
    gap: 6px;
    color: #fff;
}
.indicators span {
    display: grid;
    place-items: center;
    width: 32px;
    height: 32px;
    background: rgba(0, 0, 0, 0.75);
}
.cursor {
    position: absolute;
    left: 748px;
    top: 916px;
    width: 16px;
    height: 24px;
}
```
